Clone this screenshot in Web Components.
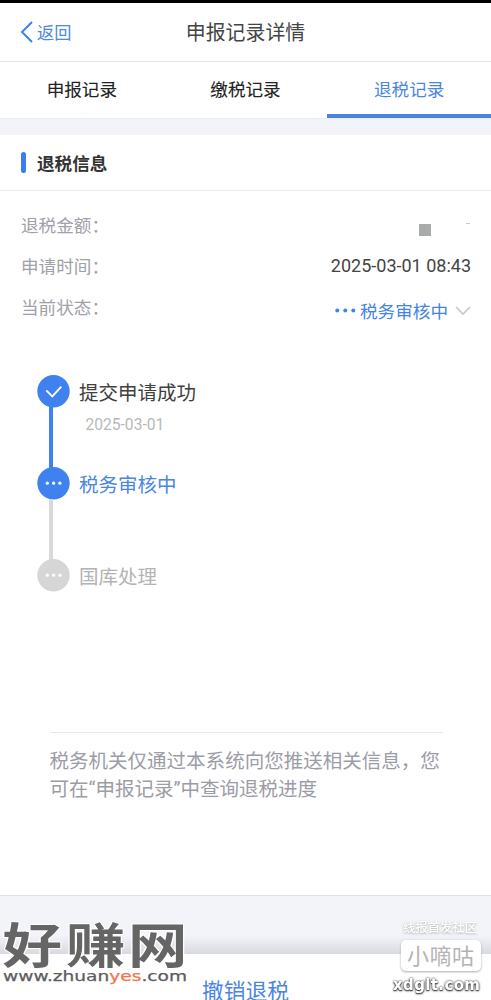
<!DOCTYPE html>
<html lang="zh-CN">
<head>
<meta charset="utf-8">
<title>申报记录详情</title>
<style>
html,body{margin:0;height:1000px;overflow:hidden;background:#fff}
body{font-family:Roboto,"Noto Sans CJK SC",sans-serif}
</style>
</head>
<body>
<refund-page></refund-page>
<script>
const define=(name,html)=>customElements.define(name,class extends HTMLElement{
  constructor(){
    super();
    const t=document.createElement('template');
    t.innerHTML=html;
    this.attachShadow({mode:'open'}).append(t.content.cloneNode(true));
  }
});

define('nav-header',`<style>
:host{display:grid;grid-template-columns:1fr auto 1fr;align-items:center;box-sizing:border-box;height:62px;border-top:3px solid #000;border-bottom:1px solid #e6e6e8;color:#444;background:#fff}
.back{display:flex;align-items:center;color:#4c88e0;font-size:17.2px;padding-left:20px;gap:4px}
.back span{margin-top:-2px}
.title{font-size:19.9px;line-height:30px;padding-top:3px}
</style><div class="back"><svg width="13" height="22" viewBox="0 0 13 22" fill="none" stroke="#3f82e6" stroke-width="2"><path d="M12 1 2 11 12 21"/></svg><span>返回</span></div><div class="title"><slot></slot></div>`);

define('tab-item',`<style>
:host{flex:1;display:flex;align-items:center;justify-content:center;box-sizing:border-box;height:56px;font-size:17.6px;color:#222;-webkit-text-stroke:.12px #222;border-bottom:4px solid transparent}
:host([active]){color:#4a86e0;border-color:#4a84e0;-webkit-text-stroke:0}
</style><slot></slot>`);
define('tab-bar',`<style>:host{display:flex;background:#fff;height:56px}</style><slot></slot>`);

define('section-title',`<style>
:host{display:flex;align-items:center;gap:11px;box-sizing:border-box;height:56px;padding-left:21px;border-bottom:1px solid #ebebee;font-size:17.6px;font-weight:700;color:#333}
i{display:block;width:5px;height:21px;border-radius:2.5px;background:#3c7cf0}
</style><i></i><span><slot></slot></span>`);

define('info-row',`<style>
:host{display:flex;justify-content:space-between;align-items:center;height:41px;padding:0 20px 0 21px;font-size:17.6px;color:#a0a0a8}
.l{margin-top:-4px}
.v{display:flex;align-items:center;color:#444;margin-top:-4px}
</style><span class="l"><slot name="label"></slot></span><span class="v"><slot></slot></span>`);

define('masked-amount',`<style>
:host{display:flex;align-items:flex-start;gap:35px;height:16px;padding-top:8px}
i{width:12px;height:12px;background:#a8aca8;margin:3px 0 0}
b{width:4px;height:1px;background:#c8c8c8;margin-top:2px}
:host{margin-right:1px}
</style><i></i><b></b>`);

define('status-value',`<style>
:host{display:flex;align-items:center;color:#4583e3;font-size:17.6px;padding-top:8px}
.d{margin-right:4px}.c{margin-left:7px}
</style><svg class="d" width="21" height="6" fill="#4583e3"><circle cx="2.3" cy="2.5" r="2"/><circle cx="10.3" cy="2.5" r="2"/><circle cx="18.3" cy="2.5" r="2"/></svg><slot></slot><svg class="c" width="16" height="10" fill="none" stroke="#c8c8cc" stroke-width="1.7"><path d="m1 1 7 7 7-7"/></svg>`);

define('step-item',`<style>
:host{display:grid;grid-template-columns:33px 1fr;column-gap:9px;height:92px;--c:#4081f0;--t:#4a86e0;--line:#4081f0}
:host([state=done]){--t:#404040}
:host([state=active]){--line:#d9d9d9}
:host([state=wait]){--c:#d6d6d6;--t:#b3b3b6}
.rail{display:flex;flex-direction:column;align-items:center}
.rail svg{flex:none}
.line{width:4px;flex:1;background:var(--line);margin:-1px 5px -1px 0}
:host([state=wait]) .line{display:none}
.check{display:none}
:host([state=done]) .check{display:block}
:host([state=done]) .dots{display:none}
.txt{font-size:19.5px;line-height:37px;color:var(--t)}
.sub{font-size:15.6px;line-height:18px;color:#b8b8b8;padding:4px 0 0 6.5px}
</style><div class="rail"><svg width="33" height="33" viewBox="0 0 33 33"><circle cx="16.5" cy="16.2" r="16.2" style="fill:var(--c)"/><path class="check" d="m9.3 15.3 6 6 9-9.6" fill="none" stroke="#fff" stroke-width="1.9"/><g class="dots" fill="#fff"><circle cx="10.3" cy="16.2" r="1.6"/><circle cx="16.6" cy="16.2" r="1.6"/><circle cx="22.9" cy="16.2" r="1.6"/></g></svg><div class="line"></div></div><div><div class="txt"><slot></slot></div><div class="sub"><slot name="date"></slot></div></div>`);

define('step-list',`<style>:host{display:block;padding:0 37px;margin-top:46px;height:357px;box-sizing:border-box}</style><slot></slot>`);

define('notice-text',`<style>
:host{display:block;box-sizing:border-box;margin:0 48px 0 49.5px;border-top:1px solid #e8e8ea;padding-top:13px;font-size:19.52px;line-height:28px;color:#9c9ca5;height:163px;font-family:"Noto Sans CJK SC",sans-serif}
div{white-space:nowrap}
.q{font-family:Roboto,sans-serif}
</style><div>税务机关仅通过本系统向您推送相关信息，您</div><div>可在<span class="q">“</span>申报记录<span class="q">”</span>中查询退税进度</div>`);

define('action-bar',`<style>
:host{display:block;border-top:1px solid #e0e1e5;background:#f3f4f9}
.gap{height:58px;background:linear-gradient(#f3f4f9 68%,#d9dadf)}
.btn{background:#fff;height:46px;text-align:center;font-size:21.7px;line-height:32px;color:#4a86e0;padding-top:22px;box-sizing:border-box}
</style><div class="gap"></div><div class="btn"><slot></slot></div>`);

define('brand-mark',`<style>
:host{position:absolute;left:0;top:905px;width:192px;height:86px;display:block}
svg{display:block;overflow:visible}
</style><svg width="192" height="86">
<g transform="scale(1.24 1)" font-family="Noto Sans CJK SC" font-weight="700" font-size="48" fill="#656565" stroke="#fff" stroke-width="2" paint-order="stroke" stroke-linejoin="round"><text y="58.5" x="2 53.3 103.2">好赚网</text></g>
<text x="3" y="76" font-family="DejaVu Sans" font-size="14.5" textLength="184" lengthAdjust="spacingAndGlyphs" fill="#5c5c5c" stroke="#5c5c5c" stroke-width=".25">www.zhuan<tspan fill="#f4714f" stroke="#f4714f">yes</tspan>.com</text></svg>`);

define('community-mark',`<style>
:host{position:absolute;left:388px;top:915px;display:block;width:103px;height:85px}
svg{display:block}
.s{filter:drop-shadow(0 1px 1px #aaa)}
</style><svg width="103" height="85">
<g class="s"><text x="15" y="17" font-family="Noto Sans CJK SC" font-weight="500" font-size="12.3" textLength="74" fill="#fff">线报首发社区</text></g>
<rect class="s" x="13" y="25" width="80" height="31" rx="5" fill="#fff"/>
<text x="19" y="48.5" font-family="Noto Sans CJK SC" font-size="22" textLength="67" fill="#b4b4b6">小嘀咕</text>
<g style="filter:drop-shadow(0 0 .8px #333) drop-shadow(0 1px .7px #666)"><text x="5" y="74.5" font-family="DejaVu Sans" font-weight="700" font-size="15" textLength="87" fill="#fff">xdglt.com</text></g></svg>`);

define('refund-page',`<style>
:host{display:block;position:relative;width:491px;height:1000px;overflow:hidden;background:#fff}
.band{height:17px;background:#f3f4f9;border-top:1px solid #ececf0;box-sizing:border-box}
.rows{padding-top:15px}
</style>
<nav-header>申报记录详情</nav-header>
<tab-bar><tab-item>申报记录</tab-item><tab-item>缴税记录</tab-item><tab-item active>退税记录</tab-item></tab-bar>
<div class="band"></div>
<section-title>退税信息</section-title>
<div class="rows">
<info-row><span slot="label">退税金额：</span><masked-amount></masked-amount></info-row>
<info-row><span slot="label">申请时间：</span><span style="font-size:18px">2025-03-01 08:43</span></info-row>
<info-row><span slot="label">当前状态：</span><status-value>税务审核中</status-value></info-row>
</div>
<step-list>
<step-item state="done">提交申请成功<span slot="date">2025-03-01</span></step-item>
<step-item state="active">税务审核中</step-item>
<step-item state="wait">国库处理</step-item>
</step-list>
<notice-text></notice-text>
<action-bar>撤销退税</action-bar>
<brand-mark></brand-mark>
<community-mark></community-mark>`);
</script>
</body>
</html>
